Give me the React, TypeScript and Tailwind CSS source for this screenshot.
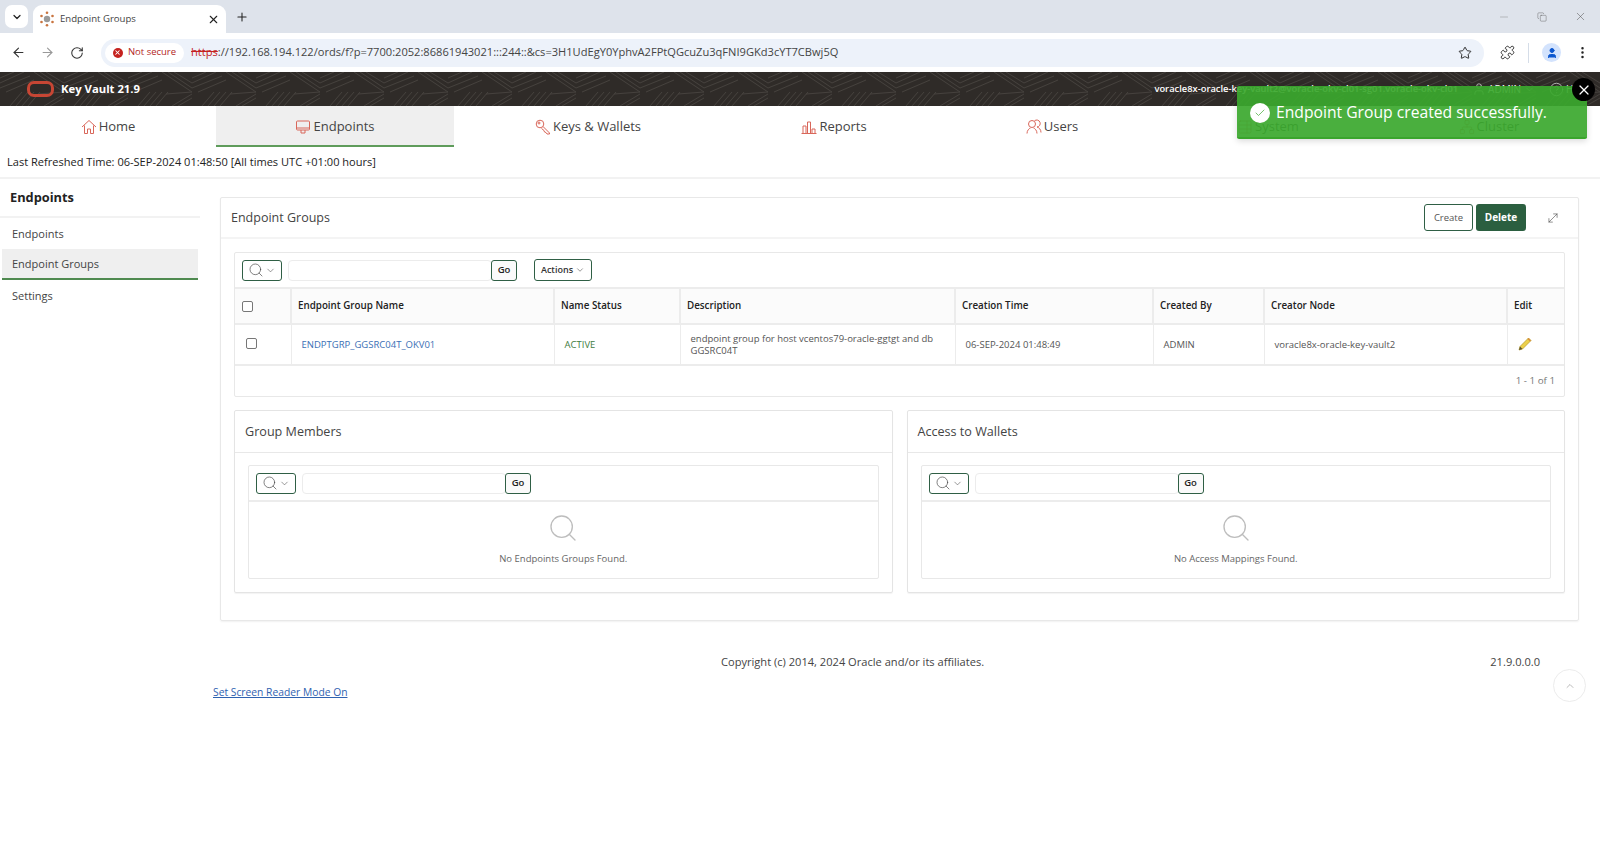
import { ArrowLeft, ArrowRight, ChevronDown, ChevronUp, Check, Minus, MoreVertical, Plus, Puzzle, RotateCw, Search, Star, User, X, CircleHelp, Copy, MoveDiagonal, TableProperties, Network } from 'lucide-react';

const IconHome = () => (
  <svg width="16" height="16" viewBox="0 0 16 16" fill="none" stroke="#d9675a" strokeWidth="1">
    <path d="M1 8 8 1.500 15 8M3.500 6.500V14.500H6.500V10H9.500V14.500H12.500V6.500" />
  </svg>
);

const IconMonitor = () => (
  <svg width="16" height="16" viewBox="0 0 16 16" fill="none" stroke="#d9675a" strokeWidth="1">
    <rect x="1.500" y="2" width="13" height="9" rx="1" />
    <path d="M1.500 9h13M6 11v3h4v-3" />
  </svg>
);

const IconKey = () => (
  <svg width="16" height="16" viewBox="0 0 16 16" fill="none" stroke="#d9675a" strokeWidth="1">
    <circle cx="5" cy="5" r="3.800" />
    <circle cx="4" cy="4" r="1" />
    <path d="M8 7.500l6.500 6.500v1h-2.500l-1-1.500-1.500-.5-.5-1.500-2.500-2" />
  </svg>
);

const IconReports = () => (
  <svg width="16" height="16" viewBox="0 0 16 16" fill="none" stroke="#d9675a" strokeWidth="1">
    <path d="M.5 14.500h15M2 14.500V7h3v7.500M6.500 14.500V3h3v11.500M11 14.500V10h3v4.500" />
  </svg>
);

const IconUsers = () => (
  <svg width="16" height="16" viewBox="0 0 16 16" fill="none" stroke="#d9675a" strokeWidth="1">
    <circle cx="6" cy="5" r="3.500" />
    <path d="M1 14.500c0-3 2-5 3.500-5.500M7.500 9c1.500.5 3.500 2.500 3.500 5.500M8.500 1.800A3.500 3.500 0 1 1 11 8c2 .5 4 2.500 4 5.500" />
  </svg>
);

const IconPencil = () => (
  <svg width="14" height="14" viewBox="0 0 14 14">
    <path d="M10.500 1 13 3.500 4.500 12 1 13l1-3.500z" fill="#ecd04a" stroke="#b59a26" strokeWidth=".7" />
    <path d="M1 13l1-3.500L4.500 12z" fill="#5b5232" />
    <path d="M10.500 1 13 3.500 12 4.500 9.500 2z" fill="#d98a3a" />
  </svg>
);

const Favicon = () => (
  <svg width="16" height="16" viewBox="0 0 16 16" fill="none">
    <circle cx="8" cy="8" r="3.200" fill="#9a9a9a" />
    <g fill="#c9743f">
      <circle cx="8" cy="1.800" r="1.300" />
      <circle cx="8" cy="14.200" r="1.300" />
      <circle cx="2.500" cy="5" r="1.300" />
      <circle cx="13.500" cy="5" r="1.300" />
      <circle cx="2.500" cy="11" r="1.300" />
      <circle cx="13.500" cy="11" r="1.300" />
    </g>
  </svg>
);

const HeaderPattern = () => (
  <svg className="absolute inset-0 h-full w-full" aria-hidden="true">
    <defs>
      <pattern id="kv-lines" width="64" height="34" patternUnits="userSpaceOnUse">
        <g stroke="#45413d" strokeWidth="1" fill="none">
          <path d="M0 6 14 0M0 11 24 0M0 16 30 4M6 20 34 8M40 0l24 16M34 0l30 20M46 0l18 11" />
          <path d="M10 34 22 20M16 34 28 20M22 34 34 20M28 34 40 20M44 34l20-12M50 34l14-8M38 22l26-2" />
        </g>
      </pattern>
    </defs>
    <rect width="100%" height="100%" fill="url(#kv-lines)" />
  </svg>
);

const navItems = [
  { name: 'Home', icon: <IconHome />, width: 'w-[216px]' },
  { name: 'Endpoints', icon: <IconMonitor />, width: 'w-[238px]', active: true },
  { name: 'Keys & Wallets', icon: <IconKey />, width: 'w-[268px]' },
  { name: 'Reports', icon: <IconReports />, width: 'w-[224px]' },
  { name: 'Users', icon: <IconUsers />, width: 'w-[212px]' },
  { name: 'System', icon: <TableProperties size={16} strokeWidth={1} color="#d9675a" />, width: 'w-[220px]' },
  { name: 'Cluster', icon: <Network size={16} strokeWidth={1} color="#d9675a" />, width: 'w-[222px]' },
];

const SearchBar = ({ actions }: { actions?: boolean }) => (
  <div className="flex h-[36px] items-center pl-[7px] border-b-2 border-[#ececec]">
    <button className="flex h-[21px] w-[40px] items-center justify-center gap-[1px] rounded-[3px] border border-[#2f5f45] bg-white text-[#444]">
      <Search size={16} strokeWidth={1} />
      <ChevronDown size={11} strokeWidth={1.2} />
    </button>
    <div className="ml-[6px] flex h-[21px] w-[204px] rounded-[4px] border border-[#ececec] bg-white" />
    <button className="ml-[-1px] flex h-[21px] w-[26px] items-center justify-center rounded-[3px] border border-[#2f5f45] bg-[#fafafa] text-[9.5px] font-semibold text-[#222]">
      Go
    </button>
    {actions && (
      <button className="ml-[17px] flex h-[22px] w-[58px] items-center justify-center gap-[2px] rounded-[3px] border border-[#2f5f45] bg-white text-[9px] font-semibold text-[#333]">
        Actions
        <ChevronDown size={10} strokeWidth={1.2} />
      </button>
    )}
  </div>
);

const SubPanel = ({ title, empty }: { title: string; empty: string }) => (
  <section className="h-[183px] flex-1 rounded-[2px] border border-[#e4e4e4] shadow-[0_1px_1px_rgba(0,0,0,0.05)]">
    <h3 className="flex h-[42px] items-center border-b border-[#e8e8e8] pl-[10px] pt-[1px] text-[12.6px] text-[#444]">{title}</h3>
    <div className="mx-[13px] mt-[12px] h-[114px] rounded-[2px] border border-[#e8e8e8]">
      <SearchBar />
      <div className="flex flex-col items-center pt-[9px]">
        <Search size={32} strokeWidth={1} color="#bdbdbd" className="translate-y-[1px]" />
        <p className="mt-[9px] text-[9.5px] text-[#666]">{empty}</p>
      </div>
    </div>
  </section>
);

const headers = ['Endpoint Group Name', 'Name Status', 'Description', 'Creation Time', 'Created By', 'Creator Node', 'Edit'];

export default function App() {
  return (
    <div className="relative h-[867px] w-full overflow-hidden bg-white font-['Open_Sans',sans-serif] text-[#333]">
      {/* chrome tabs */}
      <div className="flex h-[33px] items-end bg-[#dee3eb] pl-[5px]">
        <div className="mb-[5px] flex h-[23px] w-[23px] items-center justify-center rounded-[7px] bg-white">
          <ChevronDown size={12} strokeWidth={2.5} color="#222" />
        </div>
        <div className="ml-[5px] flex h-[28px] w-[193px] items-center rounded-t-[9px] bg-white pl-[6px] pr-[6px]">
          <Favicon />
          <span className="ml-[5px] flex-1 text-[9.6px] text-[#444]">Endpoint Groups</span>
          <X size={13} strokeWidth={2} color="#222" />
        </div>
        <Plus size={14} strokeWidth={1.8} color="#222" className="mb-[9px] ml-[9px]" />
        <div className="mb-[10px] ml-auto flex items-center gap-[27px] pr-[13px]">
          <Minus size={12} strokeWidth={1} color="#888" />
          <Copy size={10} strokeWidth={1} color="#555" />
          <X size={13} strokeWidth={1} color="#555" />
        </div>
      </div>

      {/* chrome toolbar */}
      <div className="flex h-[39px] items-center bg-white pl-[11px]">
        <ArrowLeft size={15} strokeWidth={1.8} color="#333" />
        <ArrowRight size={15} strokeWidth={1.8} color="#999" className="ml-[14px]" />
        <RotateCw size={14} strokeWidth={1.8} color="#333" className="ml-[15px]" />
        <div className="ml-[17px] flex h-[28px] w-[1383px] items-center rounded-full bg-[#edf2fa] pl-[4px] pr-[12px]">
          <div className="flex h-[20px] w-[79px] items-center justify-center gap-[5px] rounded-full bg-white">
            <span className="flex h-[10px] w-[10px] items-center justify-center rounded-full bg-[#c5221f]">
              <X size={7} strokeWidth={3.5} color="white" />
            </span>
            <span className="text-[9.5px] text-[#b3261e]">Not secure</span>
          </div>
          <span className="ml-[7px] flex-1 text-[11.1px] text-[#444]">
            <span className="text-[#c5221f] line-through">https</span>
            ://192.168.194.122/ords/f?p=7700:2052:86861943021:::244::&amp;cs=3H1UdEgY0YphvA2FPtQGcuZu3qFNI9GKd3cYT7CBwj5Q
          </span>
          <Star size={14} strokeWidth={1.6} color="#222" />
        </div>
        <Puzzle size={15} strokeWidth={1.5} color="#222" className="ml-[16px]" />
        <span className="ml-[13px] h-[20px] w-px bg-[#d5dde8]" />
        <span className="ml-[13px] flex h-[19px] w-[19px] items-center justify-center rounded-full bg-[#d3e3fd]">
          <User size={12} fill="#0b57d0" color="#0b57d0" />
        </span>
        <MoreVertical size={15} strokeWidth={2} color="#222" className="ml-[14px]" />
      </div>

      {/* app header */}
      <header className="relative flex h-[34px] items-center bg-[#2f2b28] pl-[27px] text-white">
        <HeaderPattern />
        <span className="relative h-[16px] w-[27px] rounded-[7px] border-[3px] border-[#c74634]" />
        <span className="relative ml-[7px] text-[11.3px] font-bold">Key Vault 21.9</span>
        <div className="relative ml-auto flex items-center whitespace-nowrap">
          <span className="text-[9.35px] font-semibold">voracle8x-oracle-key-vault2@voracle-okv-cl01-sg01.voracle-okv-cl01</span>
          <User size={14} strokeWidth={1} className="ml-[14px]" />
          <span className="ml-[2px] text-[10px]">ADMIN</span>
          <ChevronDown size={11} strokeWidth={1} className="ml-[3px]" />
          <CircleHelp size={15} strokeWidth={1} className="ml-[14px]" />
          <span className="ml-[2px] w-[34px] text-[10px]">Help</span>
        </div>
      </header>

      {/* nav tabs */}
      <nav className="flex h-[41px]">
        {navItems.map((item) => (
          <div
            key={item.name}
            className={`flex items-center justify-center gap-[2px] text-[13px] text-[#444] ${item.width} ${
              item.active ? 'border-b-2 border-[#5f9c5b] bg-[#efefef] pt-[2px]' : ''
            }`}
          >
            {item.icon}
            <span>{item.name}</span>
          </div>
        ))}
      </nav>

      <div className="flex h-[32px] items-center border-b-2 border-[#f2f2f2] pl-[7px] text-[11.05px] text-[#222]">
        Last Refreshed Time: 06-SEP-2024 01:48:50 [All times UTC +01:00 hours]
      </div>

      <div className="flex">
        {/* sidebar */}
        <aside className="w-[200px] shrink-0">
          <h2 className="flex h-[39px] items-center border-b-2 border-[#f2f2f2] pl-[10px] text-[12.8px] font-bold text-[#222]">Endpoints</h2>
          <ul className="text-[11px] text-[#444]">
            <li className="flex h-[31px] items-center pl-[12px] pt-[2px]">Endpoints</li>
            <li className="ml-[2px] mr-[2px] flex h-[31px] items-center border-b-2 border-[#4f8a50] bg-[#efefef] pl-[10px] pt-[2px]">Endpoint Groups</li>
            <li className="flex h-[31px] items-center pl-[12px] pt-[2px]">Settings</li>
          </ul>
        </aside>

        {/* main */}
        <main className="flex-1 pt-[18px]">
          <div className="ml-[20px] mr-[21px] h-[424px] rounded-[2px] border border-[#e8e8e8] shadow-[0_1px_2px_rgba(0,0,0,0.06)]">
            <div className="flex h-[41px] items-center border-b-2 border-[#f4f4f4] pl-[10px] pr-[18px]">
              <h1 className="pt-[2px] text-[12.5px] text-[#444]">Endpoint Groups</h1>
              <button className="ml-auto flex h-[27px] w-[49px] items-center justify-center rounded-[3px] border border-[#2f5f45] bg-white pt-[1px] text-[9.5px] text-[#555]">
                Create
              </button>
              <button className="ml-[3px] flex h-[27px] w-[50px] items-center justify-center rounded-[3px] bg-[#2b5f40] text-[10px] font-bold text-white">
                Delete
              </button>
              <MoveDiagonal size={14} strokeWidth={1} color="#444" className="ml-[20px]" />
            </div>

            <div className="ml-[13px] mr-[13px] mt-[13px] h-[145px] rounded-[2px] border border-[#e8e8e8]">
              <SearchBar actions />
              <table className="w-full table-fixed border-collapse text-left text-[9.5px]">
                <colgroup>
                  <col className="w-[56px]" />
                  <col className="w-[263px]" />
                  <col className="w-[126px]" />
                  <col className="w-[275px]" />
                  <col className="w-[198px]" />
                  <col className="w-[111px]" />
                  <col className="w-[243px]" />
                  <col />
                </colgroup>
                <thead>
                  <tr className="h-[35px] border-b-2 border-[#ececec] bg-[#fbfbfb]">
                    <th className="border-r-2 border-[#ececec] pl-[7px]">
                      <span className="block h-[11px] w-[11px] rounded-[2px] border border-[#777] bg-white" />
                    </th>
                    {headers.map((h) => (
                      <th key={h} className="border-r-2 border-[#ececec] pl-[6px] text-[9.8px] font-semibold text-[#222] last:border-r-0">
                        {h}
                      </th>
                    ))}
                  </tr>
                </thead>
                <tbody>
                  <tr className="h-[41px] border-b-2 border-[#ececec] text-[#555]">
                    <td className="border-r border-[#ececec] pl-[11px] pb-[2px]">
                      <span className="block h-[11px] w-[11px] rounded-[2px] border border-[#777] bg-white" />
                    </td>
                    <td className="border-r border-[#ececec] pl-[10px] pt-[2px] text-[#3b6fb5]">ENDPTGRP_GGSRC04T_OKV01</td>
                    <td className="border-r border-[#ececec] pl-[10px] pt-[2px] text-[#3f7d3f]">ACTIVE</td>
                    <td className="border-r border-[#ececec] px-[10px] leading-[12px]">endpoint group for host vcentos79-oracle-ggtgt and db GGSRC04T</td>
                    <td className="border-r border-[#ececec] pl-[10px] pt-[2px]">06-SEP-2024 01:48:49</td>
                    <td className="border-r border-[#ececec] pl-[10px] pt-[2px]">ADMIN</td>
                    <td className="border-r border-[#ececec] pl-[10px] pt-[2px]">voracle8x-oracle-key-vault2</td>
                    <td className="pl-[10px] pb-[2px]">
                      <IconPencil />
                    </td>
                  </tr>
                </tbody>
              </table>
              <div className="flex h-[30px] items-center justify-end pr-[9px] text-[9.8px] text-[#777]">1 - 1 of 1</div>
            </div>

            <div className="mx-[13px] mt-[13px] flex gap-[14px]">
              <SubPanel title="Group Members" empty="No Endpoints Groups Found." />
              <SubPanel title="Access to Wallets" empty="No Access Mappings Found." />
            </div>
          </div>

          {/* footer */}
          <div className="mt-[33px] flex items-center pl-[521px] pr-[60px] text-[11.1px] text-[#444]">
            <span>Copyright (c) 2014, 2024 Oracle and/or its affiliates.</span>
            <span className="ml-auto">21.9.0.0.0</span>
          </div>
          <a className="ml-[13px] mt-[14px] inline-block text-[10.3px] text-[#2f62b0] underline">Set Screen Reader Mode On</a>
        </main>
      </div>

      {/* back to top */}
      <button className="absolute left-[1553px] top-[669px] flex h-[33px] w-[33px] items-center justify-center rounded-full border border-[#ececec] bg-white">
        <ChevronUp size={12} strokeWidth={1} color="#777" />
      </button>

      {/* success toast */}
      <div className="absolute left-[1237px] top-[86px] flex h-[53px] w-[350px] items-center rounded-[2px] border-b-2 border-[#3aa52c] bg-[#3ba82e]/[0.92] pl-[13px] pt-[3px] shadow-[0_2px_6px_rgba(0,0,0,0.15)]">
        <span className="flex h-[20px] w-[20px] items-center justify-center rounded-full bg-white">
          <Check size={12} strokeWidth={1.5} color="#4caf40" />
        </span>
        <span className="ml-[6px] text-[15.7px] text-white">Endpoint Group created successfully.</span>
      </div>
      <button className="absolute left-[1572px] top-[78px] flex h-[23px] w-[23px] items-center justify-center rounded-full bg-black">
        <X size={16} strokeWidth={1.8} color="white" />
      </button>
    </div>
  );
}
